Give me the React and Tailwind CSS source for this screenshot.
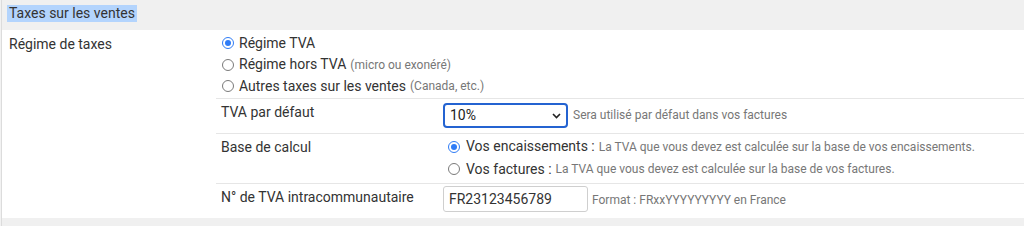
import React from "react";

function Radio({ checked }) {
  return checked ? (
    <span className="inline-flex h-[12px] w-[12px] shrink-0 items-center justify-center rounded-full border-[1.5px] border-[#2f7cf6] bg-white">
      <span className="h-[6px] w-[6px] rounded-full bg-[#2f7cf6]" />
    </span>
  ) : (
    <span className="inline-block h-[12px] w-[12px] shrink-0 rounded-full border border-[#7a7a7a] bg-white" />
  );
}

function RadioLine({ checked, label, note, className = "" }) {
  return (
    <div className={"flex items-center " + className}>
      <Radio checked={checked} />
      <span className="ml-[5px] text-[14px] text-[#333]">{label}</span>
      {note && <span className="ml-[4px] text-[12px] text-[#777]">{note}</span>}
    </div>
  );
}

export default function App() {
  return (
    <div
      className="flex h-[226px] w-full flex-col bg-[#f2f2f2] pl-px"
      style={{ fontFamily: "Roboto, 'Liberation Sans', sans-serif" }}
    >
      <div className="flex h-[226px] flex-col border-l border-[#dcdcdc]">
        <div className="flex h-[30px] shrink-0 items-start bg-[#f0f0f0] pl-[5px] pt-[5px]">
          <span className="bg-[#b3d4fd] px-[2px] text-[14px] leading-[17px] text-[#333]">
            Taxes sur les ventes
          </span>
        </div>
        <div className="flex h-[188px] shrink-0 bg-white">
          <div className="w-[214px] shrink-0 pl-[7px] pt-[4px] text-[14px] leading-[20px] text-[#333]">
            Régime de taxes
          </div>
          <div className="flex flex-1 flex-col">
            <div className="flex h-[68px] flex-col pl-[6px] pt-[2px]">
              <RadioLine checked label="Régime TVA" className="h-[22px]" />
              <RadioLine label="Régime hors TVA" note="(micro ou exonéré)" className="h-[21px]" />
              <RadioLine label="Autres taxes sur les ventes" note="(Canada, etc.)" className="h-[22px]" />
            </div>
            <div className="flex h-[35px] border-t border-[#e6e6e6]">
              <div className="w-[227px] shrink-0 pl-[5px] pt-[3px] text-[14px] leading-[20px] text-[#333]">
                TVA par défaut
              </div>
              <div className="flex items-start pt-[4px]">
                <div className="flex h-[25px] w-[125px] items-center justify-between rounded-[4px] border-[2px] border-[#2463d1] bg-white pl-[5px] pr-[5px]">
                  <span className="text-[14px] text-[#222]">10%</span>
                  <svg width="9" height="6" viewBox="0 0 9 6" fill="none">
                    <path d="M1 1l3.5 3.5L8 1" stroke="#222" strokeWidth="1.6" />
                  </svg>
                </div>
                <span className="ml-[5px] mt-[3px] text-[12px] leading-[18px] text-[#777]">
                  Sera utilisé par défaut dans vos factures
                </span>
              </div>
            </div>
            <div className="flex h-[50px] border-t border-[#e6e6e6]">
              <div className="w-[227px] shrink-0 pl-[5px] pt-[3px] text-[14px] leading-[20px] text-[#333]">
                Base de calcul
              </div>
              <div className="flex flex-col pl-[5px] pt-[1px]">
                <div className="flex h-[23px] items-center">
                  <Radio checked />
                  <span className="ml-[6px] text-[14px] text-[#333]">Vos encaissements :</span>
                  <span className="ml-[4px] text-[12px] text-[#777]">
                    La TVA que vous devez est calculée sur la base de vos encaissements.
                  </span>
                </div>
                <div className="flex h-[22px] items-center">
                  <Radio />
                  <span className="ml-[6px] text-[14px] text-[#333]">Vos factures :</span>
                  <span className="ml-[4px] text-[12px] text-[#777]">
                    La TVA que vous devez est calculée sur la base de vos factures.
                  </span>
                </div>
              </div>
            </div>
            <div className="flex h-[35px] border-t border-[#e6e6e6]">
              <div className="w-[227px] shrink-0 pl-[5px] pt-[3px] text-[14px] leading-[20px] text-[#333]">
                N° de TVA intracommunautaire
              </div>
              <div className="flex items-start pt-[2px]">
                <div className="flex h-[26px] w-[145px] items-center rounded-[3px] border border-[#cfcfcf] bg-white pl-[5px]">
                  <span className="text-[14px] text-[#333]">FR23123456789</span>
                </div>
                <span className="ml-[4px] mt-[5px] text-[12px] leading-[18px] text-[#777]">
                  Format : FRxxYYYYYYYYY en France
                </span>
              </div>
            </div>
          </div>
        </div>
        <div className="flex-1 bg-[#f0f0f0]" />
      </div>
    </div>
  );
}
